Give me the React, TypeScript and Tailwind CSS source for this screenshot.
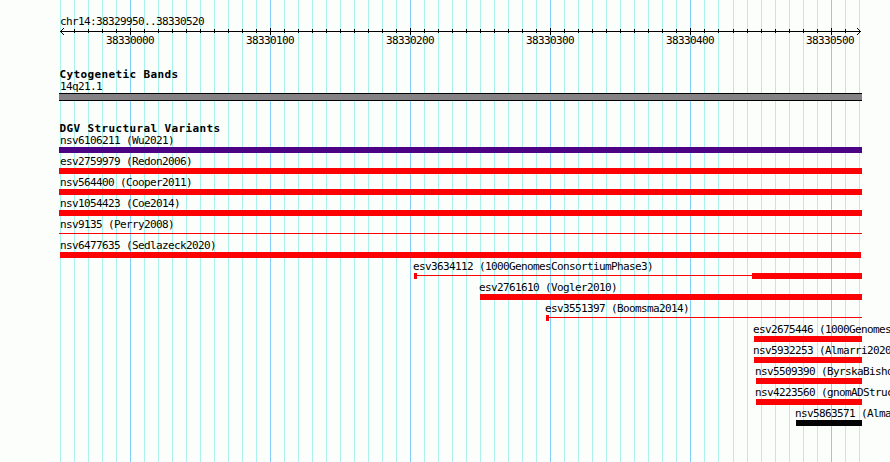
import React from 'react';

interface Variant {
  name: string;
  start: number;
  end?: number;
  color?: string;
  // thick blocks drawn on top of a thin line, [start, end]
  blocks?: [number, number][];
}

const LEFT = 60;
const RIGHT = 862;

const VARIANTS: Variant[] = [
  { name: 'nsv6106211 (Wu2021)', start: 59, color: 'bg-[#4c0284]' },
  { name: 'esv2759979 (Redon2006)', start: 59 },
  { name: 'nsv564400 (Cooper2011)', start: 59 },
  { name: 'nsv1054423 (Coe2014)', start: 59 },
  { name: 'nsv9135 (Perry2008)', start: 59, blocks: [] },
  { name: 'nsv6477635 (Sedlazeck2020)', start: 60, end: 861 },
  { name: 'esv3634112 (1000GenomesConsortiumPhase3)', start: 414, blocks: [[414, 417], [752, 862]] },
  { name: 'esv2761610 (Vogler2010)', start: 480 },
  { name: 'esv3551397 (Boomsma2014)', start: 546, blocks: [[546, 549]] },
  { name: 'esv2675446 (1000Genomes', start: 754 },
  { name: 'nsv5932253 (Almarri2020', start: 754 },
  { name: 'nsv5509390 (ByrskaBisho', start: 756 },
  { name: 'nsv4223560 (gnomADStruc', start: 756 },
  { name: 'nsv5863571 (Alma', start: 796, color: 'bg-[#040204]' },
];

// One line every 10 bp, a darker one every 100 bp
const GRID = Array.from({ length: 58 }, (_, i) => ({
  x: LEFT + i * 14 + (i >= 48 ? 1 : 0),
  major: i % 10 === 5,
}));

const TICK_LABELS = ['38330000', '38330100', '38330200', '38330300', '38330400', '38330500'];

const Grid: React.FC = () => (
  <svg className="absolute inset-0" width="890" height="462" shapeRendering="crispEdges">
    {GRID.map(({ x, major }) => (
      <rect key={x} x={x} y={0} width={1} height={462} fill={major ? '#84cefc' : '#acf2ec'} />
    ))}
  </svg>
);

const Ruler: React.FC = () => (
  <svg className="block" width="890" height="9" shapeRendering="crispEdges">
    <rect x={LEFT} y={4} width={801} height={1} />
    {GRID.slice(1, -1).map(({ x, major }) => (
      <rect key={x} x={x} y={major ? 1 : 2} width={1} height={major ? 7 : 4} />
    ))}
    {[1, 2, 3].map((d) => (
      <React.Fragment key={d}>
        <rect x={LEFT + d} y={4 - d} width={1} height={1} />
        <rect x={LEFT + d} y={4 + d} width={1} height={1} />
        <rect x={860 - d} y={4 - d} width={1} height={1} />
        <rect x={860 - d} y={4 + d} width={1} height={1} />
      </React.Fragment>
    ))}
  </svg>
);

const Glyph: React.FC<{ variant: Variant }> = ({ variant }) => {
  const { start, end = RIGHT, color = 'bg-[#fc0204]', blocks } = variant;
  if (!blocks) {
    return <div className={`h-1.5 ${color}`} style={{ marginLeft: start, width: end - start }} />;
  }
  return (
    <svg className="block" width="890" height="6" shapeRendering="crispEdges" fill="#fc0204">
      <rect x={start} y={2} width={end - start} height={1} />
      {blocks.map(([a, b]) => (
        <rect key={a} x={a} y={0} width={b - a} height={6} />
      ))}
    </svg>
  );
};

const TrackTitle: React.FC<{ children: React.ReactNode }> = ({ children }) => (
  <h2 className="h-3 pl-[59.5px] text-[11px] leading-3 font-bold tracking-[0.377px]">{children}</h2>
);

const App: React.FC = () => {
  return (
    <div className="relative h-[462px] w-[890px] overflow-hidden bg-[#fcfefc] font-['DejaVu_Sans_Mono',monospace] text-[11px] leading-3 tracking-[-0.622px] whitespace-nowrap text-black">
      <Grid />
      <div className="relative flex flex-col pt-4">
        <div className="h-[11px] pl-[60px]">chr14:38329950..38330520</div>
        <Ruler />
        <div className="-mt-px flex h-3 gap-[92px] pl-[106px]">
          {TICK_LABELS.map((label) => (
            <span key={label} className="w-12">{label}</span>
          ))}
        </div>

        <section className="pt-[22px]">
          <TrackTitle>Cytogenetic Bands</TrackTitle>
          <div className="h-3 pl-[60px]">14q21.1</div>
          <div className="ml-[59px] h-2 w-[803px] border-y border-black bg-[#848284]" />
        </section>

        <section className="pt-[22px]">
          <TrackTitle>DGV Structural Variants</TrackTitle>
          {VARIANTS.map((v) => (
            <div key={v.name} className="flex h-[21px] flex-col">
              <div className="h-3" style={{ marginLeft: Math.max(v.start - 1, LEFT) }}>{v.name}</div>
              <Glyph variant={v} />
            </div>
          ))}
        </section>
      </div>
    </div>
  );
};

export default App;
